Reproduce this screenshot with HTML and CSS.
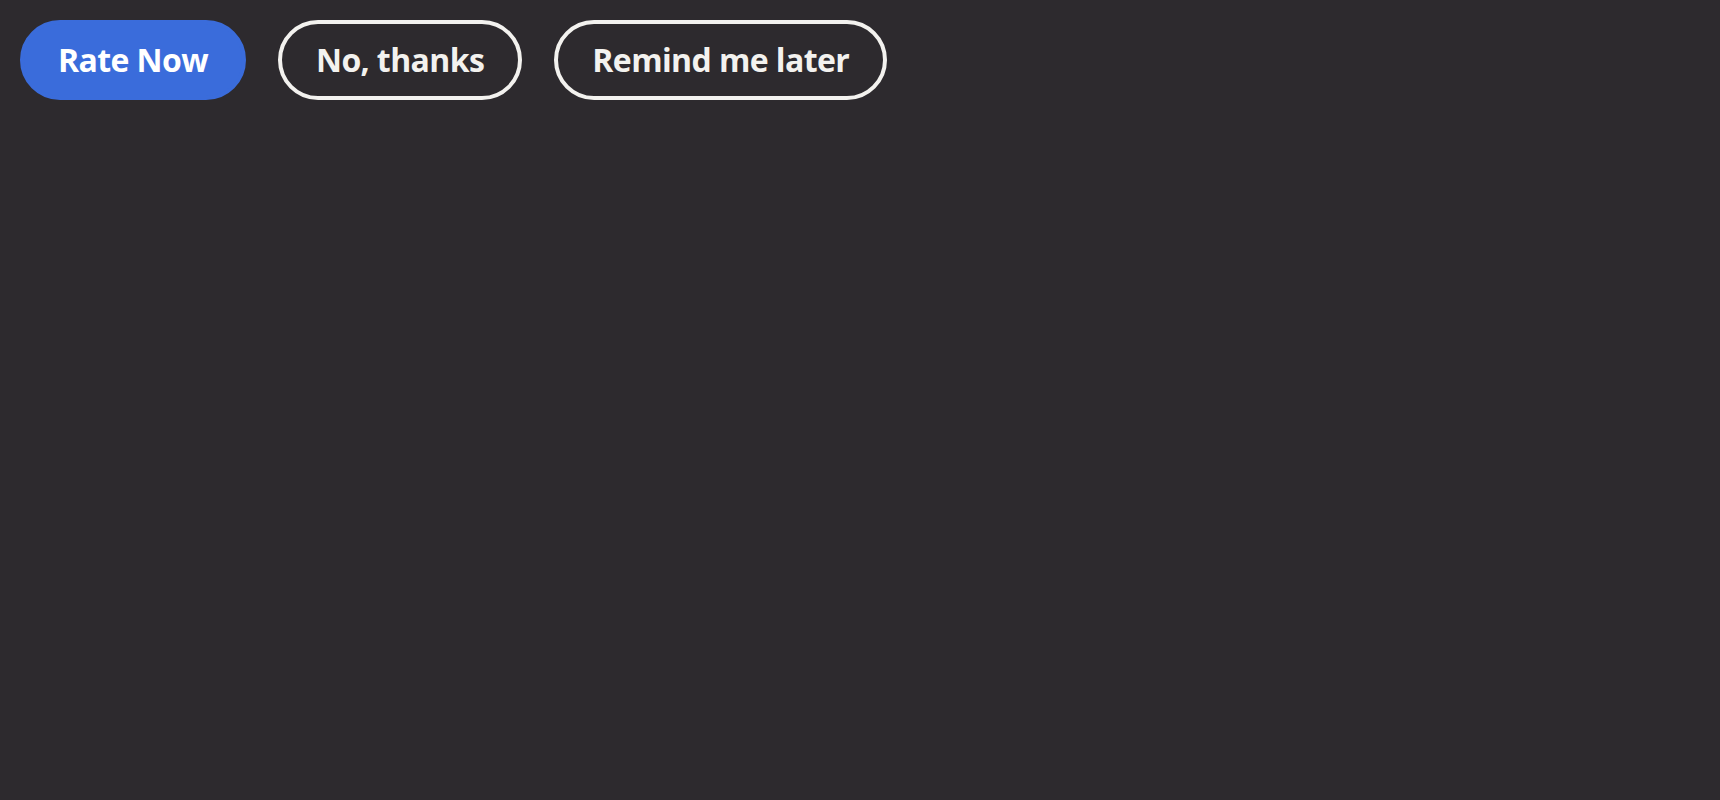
FILE: index.html
```html
<!DOCTYPE html>
<html>
<head>
<meta charset="utf-8">
<link rel="stylesheet" href="styles.css">
</head>
<body>
<div class="actions">
  <button class="btn btn-primary">Rate Now</button>
  <button class="btn btn-outline">No, thanks</button>
  <button class="btn btn-outline">Remind me later</button>
</div>
</body>
</html>
```

FILE: styles.css
```css
html, body {
  margin: 0;
  padding: 0;
  background: #2d2a2e;
  height: 100%;
}
body {
  font-family: "Open Sans", "Noto Sans", sans-serif;
}
.actions {
  display: flex;
  gap: 32px;
  padding: 20px;
  align-items: flex-start;
}
.btn {
  box-sizing: border-box;
  height: 80px;
  border-radius: 40px;
  border: 4px solid transparent;
  padding: 0 34px;
  font-family: inherit;
  font-size: 32px;
  font-weight: 700;
  color: #f3f2ef;
  background: transparent;
  line-height: 1;
  cursor: pointer;
  letter-spacing: -0.6px;
}
.btn-primary {
  background: #3a6cdb;
  border-color: #3a6cdb;
  color: #ffffff;
}
.btn-outline {
  border-color: #f3f2ef;
}
```
